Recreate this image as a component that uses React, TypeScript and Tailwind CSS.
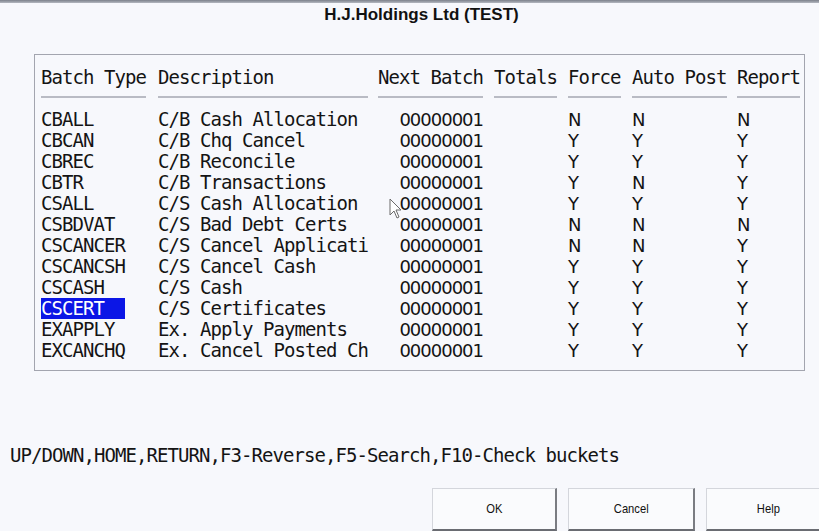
import React from "react";

const rows: [string, string, string, string, string][] = [
  ["CBALL", "C/B Cash Allocation", "N", "N", "N"],
  ["CBCAN", "C/B Chq Cancel", "Y", "Y", "Y"],
  ["CBREC", "C/B Reconcile", "Y", "Y", "Y"],
  ["CBTR", "C/B Transactions", "Y", "N", "Y"],
  ["CSALL", "C/S Cash Allocation", "Y", "Y", "Y"],
  ["CSBDVAT", "C/S Bad Debt Certs", "N", "N", "N"],
  ["CSCANCER", "C/S Cancel Applicati", "N", "N", "Y"],
  ["CSCANCSH", "C/S Cancel Cash", "Y", "Y", "Y"],
  ["CSCASH", "C/S Cash", "Y", "Y", "Y"],
  ["CSCERT", "C/S Certificates", "Y", "Y", "Y"],
  ["EXAPPLY", "Ex. Apply Payments", "Y", "Y", "Y"],
  ["EXCANCHQ", "Ex. Cancel Posted Ch", "Y", "Y", "Y"],
];

const mono = "font-['DejaVu_Sans_Mono',monospace] text-[19px] tracking-[-0.94px] leading-[21px] whitespace-pre";
const sans = "font-['DejaVu_Sans',sans-serif] text-[18px] tracking-[-1px] leading-[21px]";
const grid = "grid grid-cols-[117px_220px_116px_74px_64px_105px_63px] items-baseline";

function Btn({ label, w }: { label: string; w: string }) {
  return (
    <div className={`${w} h-[43px] shrink-0 bg-[#fafbfd] border-l border-t border-[#d4d6dc] border-r-2 border-r-[#7a7c82] border-b-2 border-b-[#6a6c72] flex items-center justify-center`}>
      <span className="inline-block scale-x-[0.86] font-['Liberation_Sans',Arial,sans-serif] text-[13px] text-[#111]">{label}</span>
    </div>
  );
}

export default function App() {
  return (
    <div className="relative w-[819px] h-[531px] overflow-hidden bg-[#f7f8fc] text-[#141414]">
      <div className="h-[3px] bg-gradient-to-b from-[#7c818b] to-[#b4b8c0]" />
      <div className="h-[51px] pt-[2px] flex justify-center pl-[24px]">
        <div className="font-['Liberation_Sans',Arial,sans-serif] font-bold text-[17px] leading-[20px] text-[#111]">
          H.J.Holdings Ltd (TEST)
        </div>
      </div>

      <div className="ml-[34px] w-[771px] h-[317px] border border-[#a3a5af] pl-[6px] pt-[12px]">
        <div className={grid}>
          {[
            ["Batch Type", "w-[105px]"],
            ["Description", "w-[210px]"],
            ["Next Batch", "w-[105px]"],
            ["Totals", "w-[63px]"],
            ["Force", "w-[52.5px]"],
            ["Auto Post", "w-[94.5px]"],
            ["Report", "w-[63px]"],
          ].map(([t, w]) => (
            <div key={t}>
              <div className={mono}>{t}</div>
              <div className={`${w} h-[2px] mt-[8px] bg-[#b9bbc4]`} />
            </div>
          ))}
        </div>
        <div className="mt-[11px]">
          {rows.map(([code, desc, f, a, r]) => (
            <div key={code} className={`${grid} h-[21px]`}>
              <div className={mono}>
                {code === "CSCERT" ? (
                  <span className="inline-block w-[84px] bg-[#0b16e6] text-white">{code}</span>
                ) : (
                  code
                )}
              </div>
              <div className={mono}>{desc}</div>
              <div className={`${sans} w-[105px] text-right`}>00000001</div>
              <div />
              <div className={sans}>{f}</div>
              <div className={sans}>{a}</div>
              <div className={sans}>{r}</div>
            </div>
          ))}
        </div>
      </div>

      <div className={`${mono} ml-[10px] mt-[74px]`}>
        UP/DOWN,HOME,RETURN,F3-Reverse,F5-Search,F10-Check buckets
      </div>

      <div className="mt-[22px] ml-[432px] flex gap-[11px]">
        <Btn label="OK" w="w-[125px]" />
        <Btn label="Cancel" w="w-[127px]" />
        <Btn label="Help" w="w-[125px]" />
      </div>

      <svg className="absolute left-[389px] top-[198px]" width="14" height="22" viewBox="0 0 14 22">
        <path d="M1 1 L1 17 L5 13 L8 20 L10 19 L7 12 L12 12 Z" fill="#ffffff" stroke="#6a6a6a" strokeWidth="1" strokeLinejoin="round" />
      </svg>
    </div>
  );
}
